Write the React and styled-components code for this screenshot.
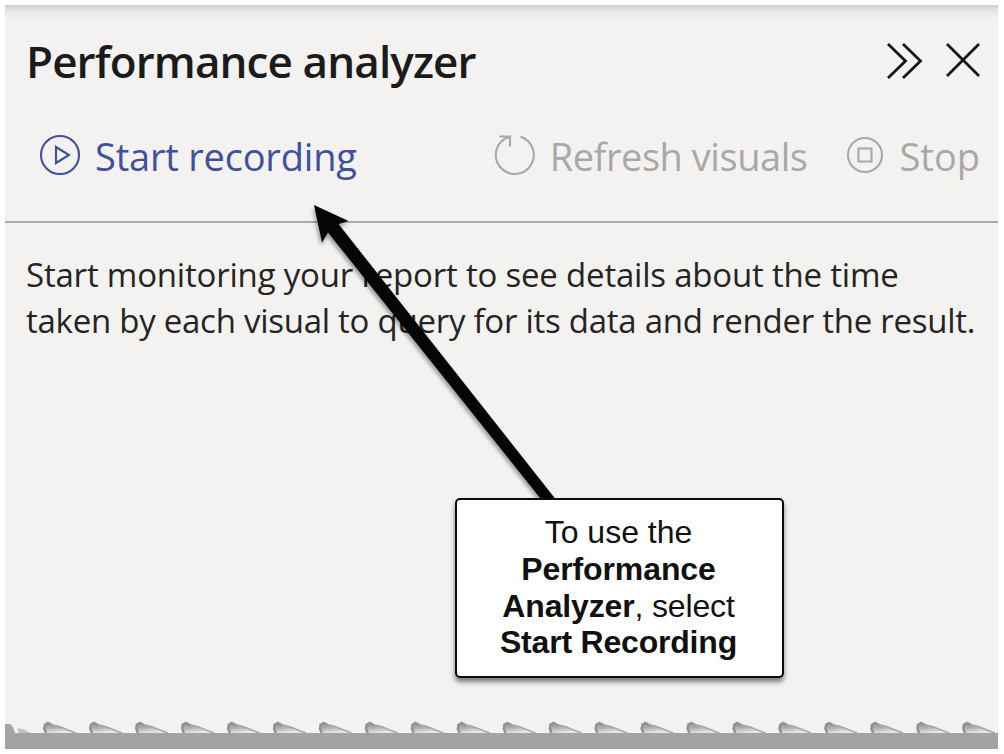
import React from "react";
import styled, { createGlobalStyle } from "styled-components";

const GlobalStyle = createGlobalStyle`
  *, *::before, *::after { box-sizing: border-box; }
  body { margin: 0; background: #fff; font-family: "Open Sans", "Noto Sans", sans-serif; }
`;

const Page = styled.main`
  width: 1004px;
  height: 754px;
  padding: 5px;
  background: #fff;
  overflow: hidden;
`;

const Panel = styled.section`
  position: relative;
  display: flex;
  flex-direction: column;
  width: 993px;
  height: 744px;
  background: linear-gradient(#cfcfcf 0, #dadada 3px, #ebebea 8px, #f3f2f1 15px);
`;

const Header = styled.header`
  display: flex;
  align-items: center;
  justify-content: space-between;
  height: 112px;
  padding: 0 18px 0 21px;
`;

const Title = styled.h1`
  margin: 0;
  color: #1c1b1b;
  font-size: 44px;
  font-weight: 600;
  line-height: 60px;
  letter-spacing: -0.89px;
  white-space: nowrap;
`;

const WindowButtons = styled.div`
  display: flex;
  align-items: center;
  gap: 22px;
`;

const IconButton = styled.button`
  display: flex;
  padding: 0 0 ${(p) => p.$lift || "0"};
  border: 0;
  background: none;
  color: #161616;
`;

const Toolbar = styled.div`
  display: flex;
  align-items: center;
  height: 106px;
  padding: 0 18px 28px 34px;
  border-bottom: 2px solid #acabaa;
`;

const ToolButton = styled.button`
  display: flex;
  align-items: center;
  gap: ${(p) => p.$gap};
  margin-left: ${(p) => p.$push || "0"};
  padding: 0;
  border: 0;
  background: none;
  color: ${(p) => (p.$disabled ? "#a9a8a7" : "#40509a")};
  font: 400 38px/52px "Open Sans", "Noto Sans", sans-serif;
  letter-spacing: ${(p) => p.$spacing || "0"};
  white-space: nowrap;
`;

const ToolLabel = styled.span`
  padding-top: 1px;
`;

const Message = styled.p`
  margin: 29px 0 0 21px;
  color: #252423;
  font-size: 33px;
  line-height: 46px;
`;

const Line = styled.span`
  display: block;
  width: max-content;
  letter-spacing: ${(p) => p.$spacing || "0"};
  white-space: nowrap;
`;

const TornEdge = styled.svg`
  display: block;
  width: 993px;
  height: 28px;
  margin-top: auto;
`;

const Pointer = styled.svg`
  position: absolute;
  left: 295px;
  top: 190px;
  filter: drop-shadow(-1px 3px 2px rgba(0, 0, 0, 0.4));
`;

const Callout = styled.aside`
  position: absolute;
  left: 450px;
  top: 493px;
  width: 329px;
  height: 180px;
  padding: 14px 2px 0 0;
  border: 2px solid #0c0c0c;
  border-radius: 5px;
  background: #fff;
  box-shadow: 0 4px 5px rgba(0, 0, 0, 0.5);
  color: #111;
  font: 400 32px/36.8px "Liberation Sans", Arial, sans-serif;
  text-align: center;
`;

const CalloutLine = styled.span`
  display: block;
  letter-spacing: ${(p) => p.$spacing || "0"};
`;

const toothOffsets = Array.from({ length: 21 }, (_, i) => 38 + i * 45.95);

export default function App() {
  return (
    <Page>
      <GlobalStyle />
      <Panel>
        <Header>
          <Title>Performance analyzer</Title>
          <WindowButtons>
            <IconButton aria-label="Collapse">
              <svg width="38" height="38" viewBox="0 0 38 38" fill="none" stroke="currentColor" strokeWidth="2.8">
                <path d="M2 2 19.500 19 2 36M17 2 34.500 19 17 36" />
              </svg>
            </IconButton>
            <IconButton aria-label="Close" $lift="2px">
              <svg width="34" height="34" viewBox="0 0 34 34" fill="none" stroke="currentColor" strokeWidth="2.8">
                <path d="M1 1 33 33M33 1 1 33" />
              </svg>
            </IconButton>
          </WindowButtons>
        </Header>
        <Toolbar>
          <ToolButton $gap="14px" $spacing="-0.2px">
            <svg width="42" height="42" viewBox="0 0 42 42" fill="none" stroke="currentColor" strokeWidth="2.1">
              <circle cx="21" cy="21" r="19" />
              <path d="M17 13v16l13-8z" />
            </svg>
            <ToolLabel>Start recording</ToolLabel>
          </ToolButton>
          <ToolButton $gap="14px" $push="auto" $spacing="-0.45px" $disabled disabled>
            <svg width="42" height="42" viewBox="0 0 42 42" fill="none" stroke="currentColor" strokeWidth="2.1">
              <path d="M26.500 2.800A19 19 0 1 1 10 5.300L16 2.500M5.500 2.500h10.500v10" />
            </svg>
            <ToolLabel>Refresh visuals</ToolLabel>
          </ToolButton>
          <ToolButton $gap="16px" $push="38px" $disabled disabled>
            <svg width="38" height="38" viewBox="0 0 38 38" fill="none" stroke="currentColor" strokeWidth="2.1">
              <circle cx="19" cy="19" r="17" />
              <path d="M12.500 12.500h13v13h-13z" />
            </svg>
            <ToolLabel>Stop</ToolLabel>
          </ToolButton>
        </Toolbar>
        <Message>
          <Line $spacing="-0.2px">Start monitoring your report to see details about the time</Line>
          <Line $spacing="-0.26px">taken by each visual to query for its data and render the result.</Line>
        </Message>
        <TornEdge viewBox="0 0 993 28">
          <defs>
            <linearGradient id="tooth" x1="0" y1="0" x2="0.35" y2="1">
              <stop offset="0.15" stopColor="#939393" />
              <stop offset="0.6" stopColor="#b4b4b4" />
              <stop offset="1" stopColor="#e6e6e6" />
            </linearGradient>
            <g id="torn">
              <path d="M3 12 0 8 1 3 5 1 8 3 16 5 24 8 33 12Z" fill="url(#tooth)" />
              <path d="M3 12 1.500 8 2 4 5 2 8 3.500 10 5" fill="none" stroke="#929292" strokeWidth="2.4" />
              <path d="M8 3.500 17 5.800 25 9 33 12" fill="none" stroke="#a8a8a8" strokeWidth="1.600" />
            </g>
          </defs>
          <path d="M0 3H5L8 6 10 12H0Z" fill="#a3a3a3" />
          <path d="M12 7 19 8.500 26 12H14Z" fill="#c0c0c0" />
          {toothOffsets.map((x) => (
            <use key={x} href="#torn" x={x} y="0" />
          ))}
          <path d="M0 12H993V28H0Z" fill="#a3a3a3" />
        </TornEdge>
        <Pointer width="270" height="312" viewBox="300 195 270 312" aria-hidden="true">
          <path d="M314 205 348.500 221 338.500 224 557 501H542.500L328 232.500 322 242.500Z" fill="#050505" />
        </Pointer>
        <Callout>
          <CalloutLine>To use the</CalloutLine>
          <CalloutLine $spacing="-0.1px">
            <b>Performance</b>
          </CalloutLine>
          <CalloutLine $spacing="-0.15px">
            <b>Analyzer</b>, select
          </CalloutLine>
          <CalloutLine $spacing="-0.2px">
            <b>Start Recording</b>
          </CalloutLine>
        </Callout>
      </Panel>
    </Page>
  );
}
